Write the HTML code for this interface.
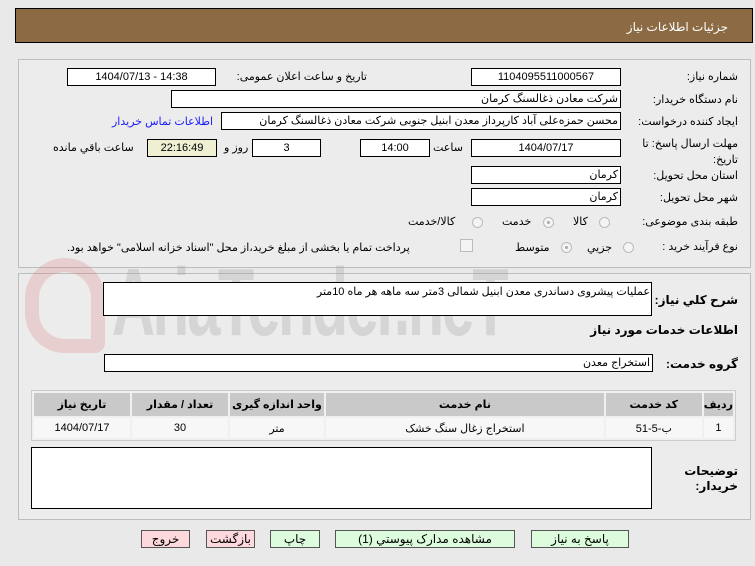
<!DOCTYPE html>
<html><head><meta charset="utf-8"><style>
body{margin:0;width:755px;height:566px;background:#e9e9e9;font-family:"Liberation Sans","DejaVu Sans",sans-serif;font-size:11px;color:#000;position:relative;overflow:hidden}
.a{position:absolute}
.box{position:absolute;background:#fff;border:1px solid #000;box-sizing:border-box;height:18px;line-height:16px;text-align:center;white-space:nowrap;overflow:hidden}
.r{text-align:right;padding-right:2px;direction:rtl}
.lbl{position:absolute;white-space:nowrap;direction:rtl;line-height:16px}
.rad{position:absolute;width:11px;height:11px;border-radius:50%;border:1px solid #bbb;background:#f4f4f4;box-sizing:border-box}
.rad.on::after{content:"";position:absolute;left:3px;top:3px;width:3px;height:3px;border-radius:50%;background:#aaa}
.panel{position:absolute;left:18px;width:733px;border:1px solid #bdbdbd;box-sizing:border-box;background:#ececec}
.btn{position:absolute;top:530px;height:18px;border:1px solid #555;box-sizing:border-box;text-align:center;line-height:16px;font-size:12px;white-space:nowrap}
table{border-collapse:separate;border-spacing:2px;background:#f0f0f0}
td{text-align:center;font-size:11px;white-space:nowrap;padding:0}
.b{font-weight:bold;font-size:12px}
</style></head><body>
<div class="a" style="left:15px;top:8px;width:738px;height:35px;background:#8b6a44;border:1px solid #000;box-sizing:border-box"></div>
<div class="lbl" style="right:27px;top:19px;color:#fff;font-size:12px">جزئیات اطلاعات نیاز</div>

<div class="panel" style="top:59px;height:209px"></div>
<div class="panel" style="top:273px;height:247px"></div>

<!-- watermark -->
<div class="a" style="left:112px;top:248px;font-size:96px;font-weight:bold;color:rgba(160,160,160,0.3);letter-spacing:-4px;transform:scaleX(0.62);transform-origin:left top;white-space:nowrap">AriaTender.neT</div>
<div class="a" style="left:25px;top:258px;width:80px;height:95px;border:14px solid rgba(220,120,120,0.25);border-radius:40px 40px 10px 40px;box-sizing:border-box"></div>

<div class="lbl" style="right:17px;top:69px">شماره نیاز:</div>
<div class="box" style="left:471px;top:68px;width:150px">1104095511000567</div>
<div class="lbl" style="right:388px;top:69px">تاریخ و ساعت اعلان عمومی:</div>
<div class="box" style="left:67px;top:68px;width:149px">1404/07/13 - 14:38</div>

<div class="lbl" style="right:17px;top:92px">نام دستگاه خریدار:</div>
<div class="box r" style="left:171px;top:90px;width:450px">شرکت معادن ذغالسنگ کرمان</div>

<div class="lbl" style="right:17px;top:114px">ایجاد کننده درخواست:</div>
<div class="box r" style="left:221px;top:112px;width:400px">محسن حمزه‌علی آباد کارپرداز معدن ابنیل جنوبی شرکت معادن ذغالسنگ کرمان</div>
<div class="lbl" style="left:112px;top:114px;color:#1a1aff">اطلاعات تماس خریدار</div>

<div class="lbl" style="right:17px;top:136px">مهلت ارسال پاسخ: تا</div>
<div class="lbl" style="right:17px;top:152px">تاریخ:</div>
<div class="box" style="left:471px;top:139px;width:150px">1404/07/17</div>
<div class="lbl" style="left:433px;top:140px">ساعت</div>
<div class="box" style="left:360px;top:139px;width:70px">14:00</div>
<div class="box" style="left:252px;top:139px;width:69px">3</div>
<div class="lbl" style="left:224px;top:140px">روز و</div>
<div class="box" style="left:147px;top:139px;width:70px;background:#efefd2">22:16:49</div>
<div class="lbl" style="left:53px;top:140px">ساعت باقي مانده</div>

<div class="lbl" style="right:17px;top:168px">استان محل تحویل:</div>
<div class="box r" style="left:471px;top:166px;width:150px">کرمان</div>
<div class="lbl" style="right:17px;top:190px">شهر محل تحویل:</div>
<div class="box r" style="left:471px;top:188px;width:150px">کرمان</div>

<div class="lbl" style="right:17px;top:214px">طبقه بندی موضوعی:</div>
<div class="rad" style="left:599px;top:217px"></div><div class="lbl" style="left:573px;top:214px">کالا</div>
<div class="rad on" style="left:543px;top:217px"></div><div class="lbl" style="left:502px;top:214px">خدمت</div>
<div class="rad" style="left:472px;top:217px"></div><div class="lbl" style="left:408px;top:214px">کالا/خدمت</div>

<div class="lbl" style="right:17px;top:239px">نوع فرآیند خرید :</div>
<div class="rad" style="left:623px;top:242px"></div><div class="lbl" style="left:587px;top:240px">جزیي</div>
<div class="rad on" style="left:561px;top:242px"></div><div class="lbl" style="left:515px;top:240px">متوسط</div>
<div class="a" style="left:460px;top:239px;width:11px;height:11px;border:1px solid #bbb;background:#f4f4f4"></div>
<div class="lbl" style="left:67px;top:240px">پرداخت تمام یا بخشی از مبلغ خرید،از محل "اسناد خزانه اسلامی" خواهد بود.</div>

<div class="lbl b" style="right:17px;top:292px">شرح كلي نياز:</div>
<div class="a" style="left:103px;top:282px;width:549px;height:34px;background:#fff;border:1px solid #000;box-sizing:border-box"></div>
<div class="lbl" style="right:105px;top:284px">عملیات پیشروی دساندری معدن ابنیل شمالی 3متر سه ماهه هر ماه 10متر</div>
<div class="lbl b" style="right:17px;top:322px">اطلاعات خدمات مورد نیاز</div>
<div class="lbl b" style="right:17px;top:356px">گروه خدمت:</div>
<div class="box r" style="left:104px;top:354px;width:549px">استخراج معدن</div>

<table class="a" style="left:31px;top:390px;width:705px;border:1px solid #ccc">
<tr style="background:#c9c9c9;height:23px;font-weight:bold"><td style="width:96px">تاریخ نیاز</td><td style="width:96px">تعداد / مقدار</td><td style="width:94px">واحد اندازه گیری</td><td>نام خدمت</td><td style="width:96px">کد خدمت</td><td style="width:24px">ردیف</td></tr>
<tr style="background:#f7f7f7;height:20px"><td>1404/07/17</td><td>30</td><td>متر</td><td>استخراج زغال سنگ خشک</td><td>ب-5-51</td><td>1</td></tr>
</table>

<div class="a" style="left:31px;top:447px;width:621px;height:62px;background:#fff;border:1px solid #000;box-sizing:border-box"></div>
<div class="lbl b" style="right:17px;top:463px">توضیحات</div>
<div class="lbl b" style="right:17px;top:478px">خریدار:</div>

<div class="btn" style="left:141px;width:49px;background:#fdd8dc">خروج</div>
<div class="btn" style="left:206px;width:49px;background:#fdd8dc">بازگشت</div>
<div class="btn" style="left:270px;width:50px;background:#ddfbdd">چاپ</div>
<div class="btn" style="left:335px;width:180px;background:#ddfbdd">مشاهده مدارک پیوستي (1)</div>
<div class="btn" style="left:531px;width:98px;background:#ddfbdd">پاسخ به نیاز</div>
</body></html>
